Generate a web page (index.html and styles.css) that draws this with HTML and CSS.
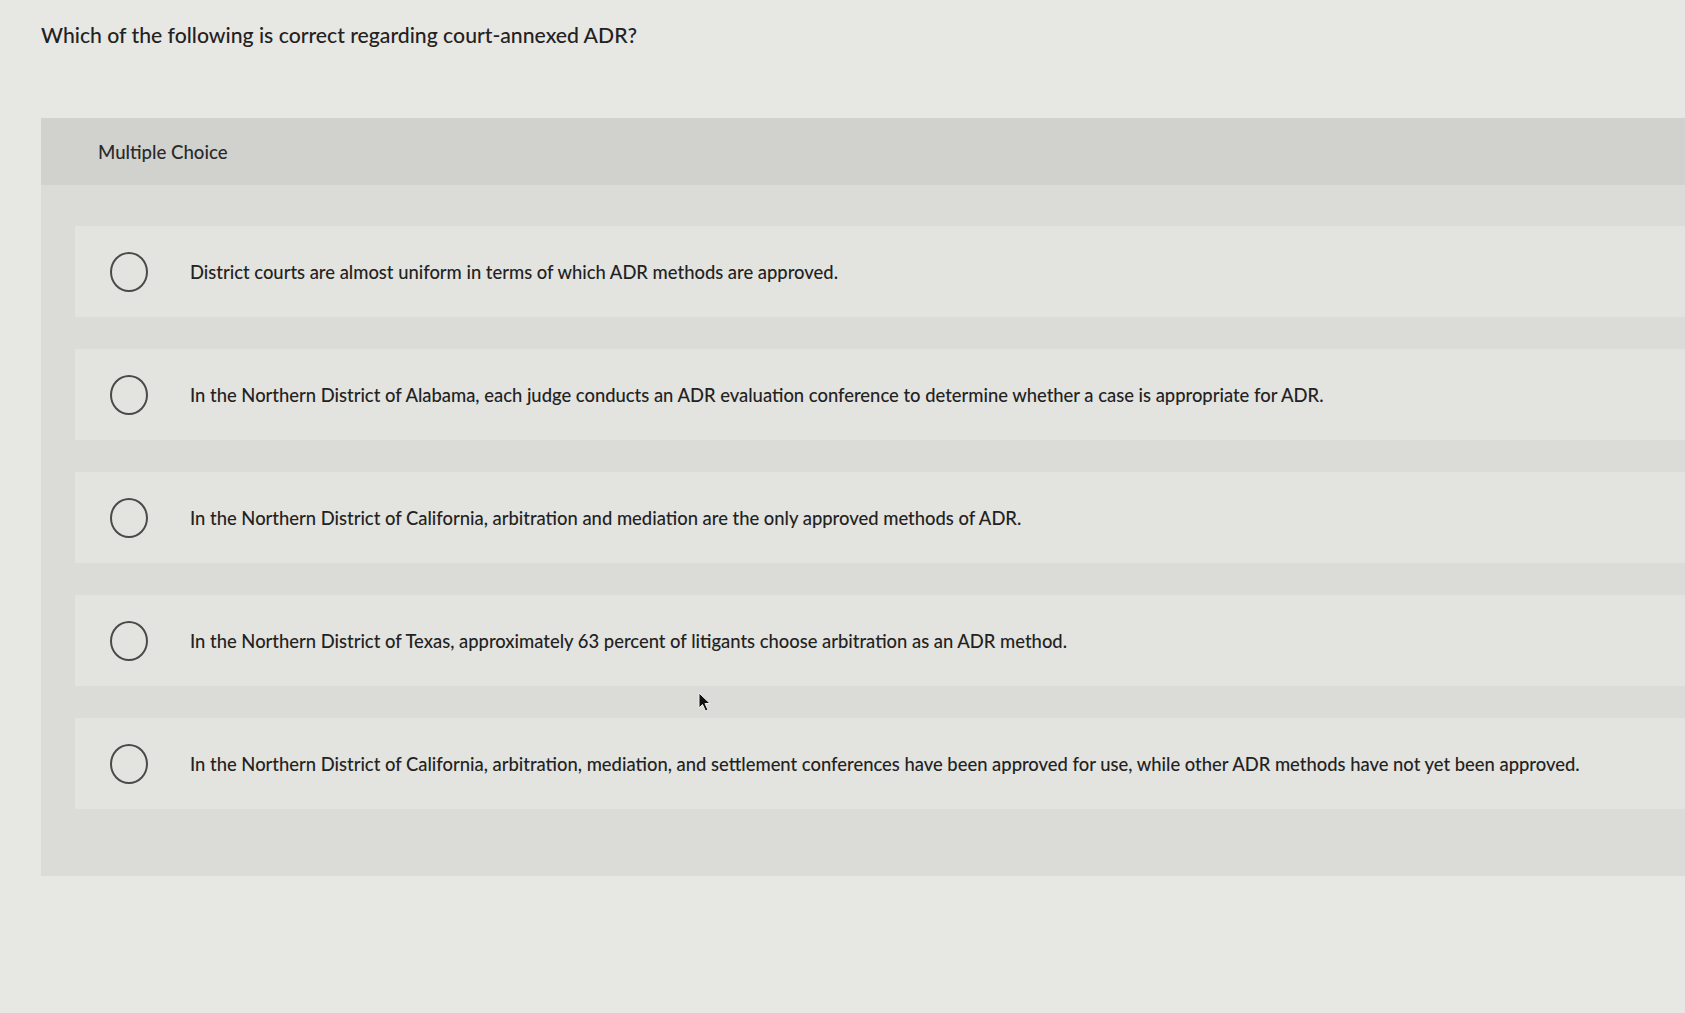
FILE: index.html
```html
<!DOCTYPE html>
<html lang="en">
<head>
<meta charset="utf-8">
<title>Multiple Choice</title>
<link rel="stylesheet" href="styles.css">
</head>
<body>
<h1 class="question">Which of the following is correct regarding court-annexed ADR?</h1>
<section class="panel">
  <div class="panel-head">Multiple Choice</div>
  <div class="panel-body">
    <label class="option"><span class="radio"></span><span class="opt-text">District courts are almost uniform in terms of which ADR methods are approved.</span></label>
    <label class="option"><span class="radio"></span><span class="opt-text">In the Northern District of Alabama, each judge conducts an ADR evaluation conference to determine whether a case is appropriate for ADR.</span></label>
    <label class="option"><span class="radio"></span><span class="opt-text">In the Northern District of California, arbitration and mediation are the only approved methods of ADR.</span></label>
    <label class="option"><span class="radio"></span><span class="opt-text">In the Northern District of Texas, approximately 63 percent of litigants choose arbitration as an ADR method.</span></label>
    <label class="option"><span class="radio"></span><span class="opt-text">In the Northern District of California, arbitration, mediation, and settlement conferences have been approved for use, while other ADR methods have not yet been approved.</span></label>
  </div>
</section>
<svg class="cursor" width="14" height="20" viewBox="0 0 14 20"><path d="M1 1 L1 16 L4.5 12.5 L7.5 19 L10 18 L7 11.5 L12 11.5 Z" fill="#111" stroke="#eee" stroke-width="1"/></svg>
</body>
</html>
```

FILE: styles.css
```css
html, body {
  margin: 0;
  padding: 0;
}
body {
  background: #e7e7e3;
  font-family: Lato, "Open Sans", "Liberation Sans", sans-serif;
  color: #222;
  width: 1685px;
  height: 1013px;
  overflow: hidden;
  position: relative;
}
.question {
  margin: 0;
  padding: 23px 0 0 41px;
  font-size: 21.2px;
  line-height: 24px;
  font-weight: 500;
  height: 118px;
  box-sizing: border-box;
}
.panel {
  margin-left: 41px;
  background: #dbdbd7;
}
.panel-head {
  height: 67px;
  background: #d1d1ce;
  display: flex;
  align-items: center;
  padding-left: 57px;
  font-size: 18.6px;
  font-weight: 500;
  color: #2a2a2a;
}
.panel-body {
  padding: 41px 0 67px 34px;
  display: flex;
  flex-direction: column;
  gap: 32px;
}
.option {
  height: 91px;
  background: #e3e3df;
  display: flex;
  align-items: center;
  padding-left: 35px;
  gap: 42px;
}
.radio {
  width: 38px;
  height: 40px;
  border: 2px solid #4a4a4a;
  border-radius: 50%;
  box-sizing: border-box;
  flex: none;
}
.opt-text {
  font-size: 18.4px;
  font-weight: 500;
  color: #222;
  white-space: nowrap;
}
.cursor {
  position: absolute;
  left: 698px;
  top: 692px;
}
```
